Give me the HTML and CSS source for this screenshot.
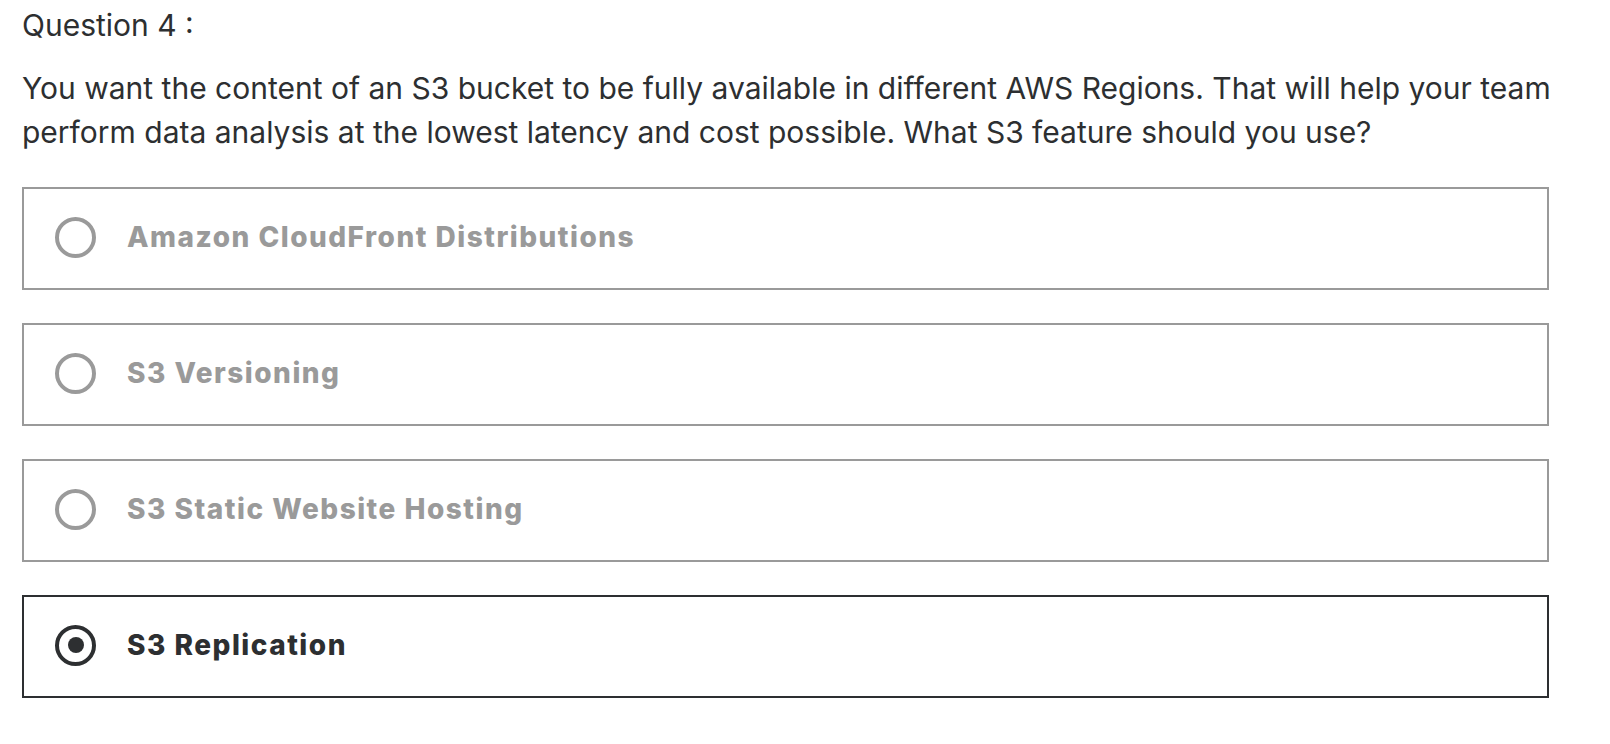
FILE: index.html
```html
<!DOCTYPE html>
<html>
<head>
<meta charset="utf-8">
<link rel="stylesheet" href="styles.css">
</head>
<body>
<div class="quiz">
  <div class="q-title">Question 4 :</div>
  <p class="q-text">You want the content of an S3 bucket to be fully available in different AWS Regions. That will help your team perform data analysis at the lowest latency and cost possible. What S3 feature should you use?</p>
  <ul class="answers">
    <li class="answer"><span class="radio"></span><span class="label">Amazon CloudFront Distributions</span></li>
    <li class="answer"><span class="radio"></span><span class="label">S3 Versioning</span></li>
    <li class="answer"><span class="radio"></span><span class="label">S3 Static Website Hosting</span></li>
    <li class="answer selected"><span class="radio"></span><span class="label">S3 Replication</span></li>
  </ul>
</div>
</body>
</html>
```
FILE: styles.css
```css
html, body {
  margin: 0;
  padding: 0;
  background: #ffffff;
}
body {
  font-family: Inter, "Liberation Sans", Arial, sans-serif;
  color: #2d2f31;
}
.quiz {
  padding: 5px 0 0 22px;
}
.q-title {
  font-size: 30px;
  line-height: 40px;
}
.q-text {
  margin: 21px 0 0 0;
  width: 1560px;
  font-size: 30px;
  line-height: 44px;
}
.answers {
  list-style: none;
  width: 1527px;
  margin: 33px 0 0 0;
  padding: 0;
  display: flex;
  flex-direction: column;
  gap: 33px;
}
.answer {
  height: 99px;
  border: 2px solid #9a9a9a;
  display: flex;
  align-items: center;
  padding-left: 31px;
  gap: 31px;
}
.radio {
  width: 33px;
  height: 33px;
  border: 4px solid #9a9a9a;
  border-radius: 50%;
  display: flex;
  align-items: center;
  justify-content: center;
  flex: none;
  margin-top: -3px;
}
.label {
  font-size: 28px;
  font-weight: 800;
  letter-spacing: 1.5px;
  color: #9a9a9a;
  margin-top: -3px;
}
.selected {
  border-color: #2d2f31;
}
.selected .radio {
  border-color: #2d2f31;
}
.selected .radio::after {
  content: "";
  width: 16px;
  height: 16px;
  border-radius: 50%;
  background: #2d2f31;
}
.selected .label {
  color: #2d2f31;
}
```
